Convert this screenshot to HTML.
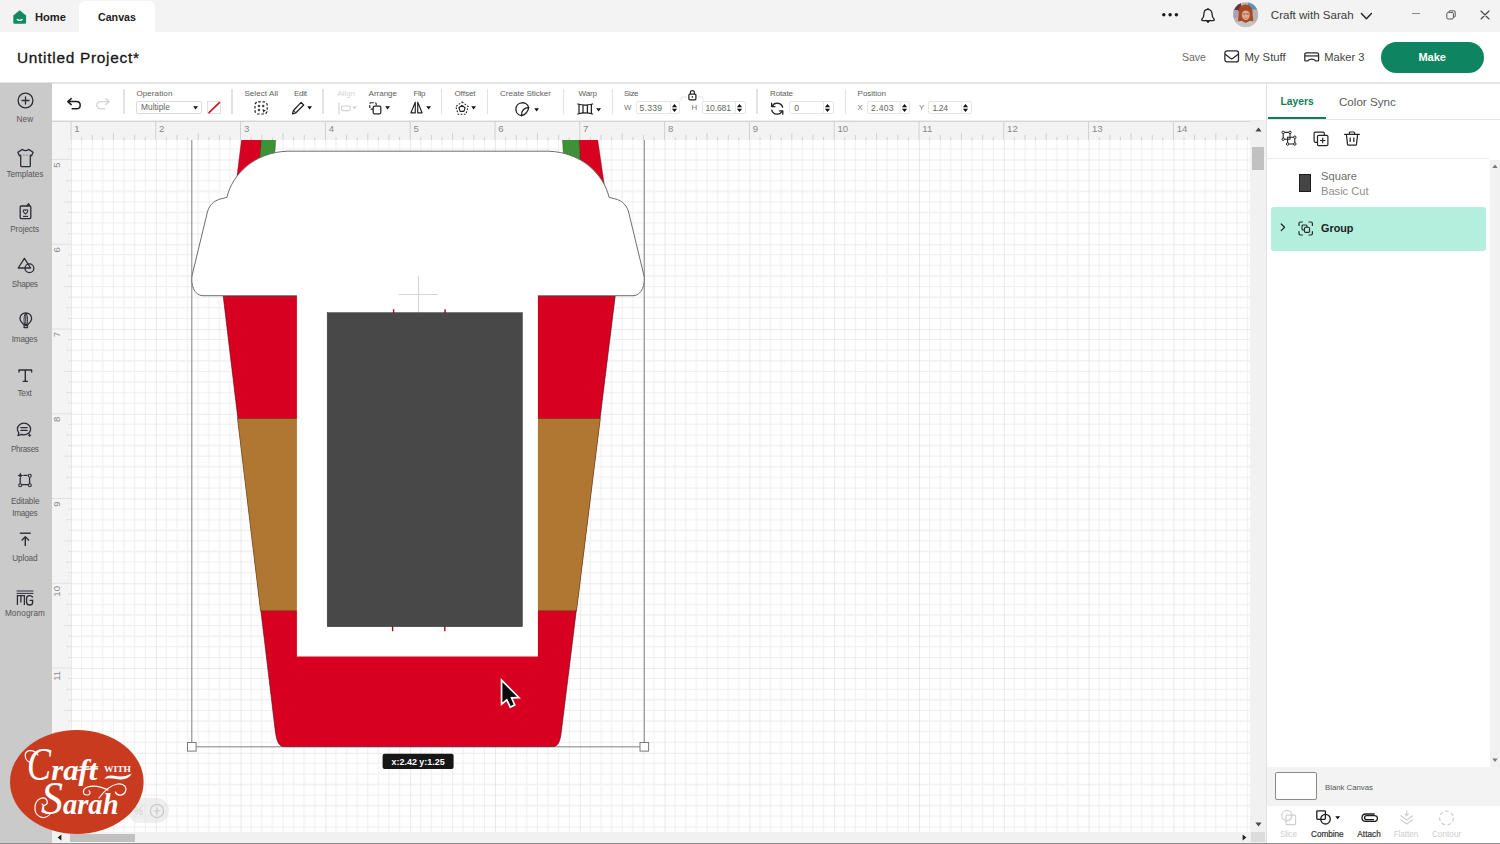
<!DOCTYPE html>
<html><head><meta charset="utf-8"><title>Untitled Project - Canvas</title>
<style>
html,body{margin:0;padding:0}
body{width:1500px;height:844px;overflow:hidden;position:relative;background:#fff;font-family:"Liberation Sans",sans-serif}
.t{position:absolute;white-space:nowrap;line-height:1}
.b{position:absolute;box-sizing:border-box}
svg{position:absolute;overflow:visible}
</style></head><body>
<div class="b" style="left:0px;top:0px;width:1500px;height:32px;background:#f3f3f3"></div>
<div class="b" style="left:79px;top:1px;width:76px;height:31px;background:#fff;border-radius:6px 6px 0 0"></div>
<div class="b" style="left:0px;top:32px;width:1500px;height:50px;background:#fff"></div>
<div class="b" style="left:0px;top:82px;width:1500px;height:2px;background:#e4e4e4"></div>
<div class="b" style="left:0px;top:83px;width:52px;height:760px;background:#cacaca"></div>
<div class="b" style="left:52px;top:84px;width:1214px;height:37px;background:#fff"></div>
<svg width="1500" height="844" viewBox="0 0 1500 844" style="left:0;top:0">
<defs>
<pattern id="g" x="71.0" y="159.5" width="84.8" height="84.75" patternUnits="userSpaceOnUse"><path d="M10.60 0V84.75M0 10.59H84.8" stroke="#eeeeee" stroke-width="1" fill="none"/><path d="M21.20 0V84.75M0 21.19H84.8" stroke="#eeeeee" stroke-width="1" fill="none"/><path d="M31.80 0V84.75M0 31.78H84.8" stroke="#eeeeee" stroke-width="1" fill="none"/><path d="M42.40 0V84.75M0 42.38H84.8" stroke="#eeeeee" stroke-width="1" fill="none"/><path d="M53.00 0V84.75M0 52.97H84.8" stroke="#eeeeee" stroke-width="1" fill="none"/><path d="M63.60 0V84.75M0 63.56H84.8" stroke="#eeeeee" stroke-width="1" fill="none"/><path d="M74.20 0V84.75M0 74.16H84.8" stroke="#eeeeee" stroke-width="1" fill="none"/><path d="M0 0V84.75M0 0H84.8" stroke="#d8d8d8" stroke-width="1.1" fill="none"/></pattern>
<clipPath id="cv"><rect x="71" y="140" width="1179" height="692"/></clipPath>
</defs>
<rect x="52" y="121" width="1198" height="711" fill="#fff"/>
<rect x="71" y="140" width="1179" height="692" fill="url(#g)"/>
<rect x="52" y="121" width="1198" height="19" fill="#f3f3f3"/>
<rect x="52" y="121" width="19" height="711" fill="#f4f4f4"/>
<rect x="52" y="120.6" width="1214" height="1.3" fill="#d2d2d2"/>
<path d="M71.00 140v-19M81.60 140v-3M92.20 140v-5M102.80 140v-3M113.40 140v-7M124.00 140v-3M134.60 140v-5M145.20 140v-3M155.80 140v-19M166.40 140v-3M177.00 140v-5M187.60 140v-3M198.20 140v-7M208.80 140v-3M219.40 140v-5M230.00 140v-3M240.60 140v-19M251.20 140v-3M261.80 140v-5M272.40 140v-3M283.00 140v-7M293.60 140v-3M304.20 140v-5M314.80 140v-3M325.40 140v-19M336.00 140v-3M346.60 140v-5M357.20 140v-3M367.80 140v-7M378.40 140v-3M389.00 140v-5M399.60 140v-3M410.20 140v-19M420.80 140v-3M431.40 140v-5M442.00 140v-3M452.60 140v-7M463.20 140v-3M473.80 140v-5M484.40 140v-3M495.00 140v-19M505.60 140v-3M516.20 140v-5M526.80 140v-3M537.40 140v-7M548.00 140v-3M558.60 140v-5M569.20 140v-3M579.80 140v-19M590.40 140v-3M601.00 140v-5M611.60 140v-3M622.20 140v-7M632.80 140v-3M643.40 140v-5M654.00 140v-3M664.60 140v-19M675.20 140v-3M685.80 140v-5M696.40 140v-3M707.00 140v-7M717.60 140v-3M728.20 140v-5M738.80 140v-3M749.40 140v-19M760.00 140v-3M770.60 140v-5M781.20 140v-3M791.80 140v-7M802.40 140v-3M813.00 140v-5M823.60 140v-3M834.20 140v-19M844.80 140v-3M855.40 140v-5M866.00 140v-3M876.60 140v-7M887.20 140v-3M897.80 140v-5M908.40 140v-3M919.00 140v-19M929.60 140v-3M940.20 140v-5M950.80 140v-3M961.40 140v-7M972.00 140v-3M982.60 140v-5M993.20 140v-3M1003.80 140v-19M1014.40 140v-3M1025.00 140v-5M1035.60 140v-3M1046.20 140v-7M1056.80 140v-3M1067.40 140v-5M1078.00 140v-3M1088.60 140v-19M1099.20 140v-3M1109.80 140v-5M1120.40 140v-3M1131.00 140v-7M1141.60 140v-3M1152.20 140v-5M1162.80 140v-3M1173.40 140v-19M1184.00 140v-3M1194.60 140v-5M1205.20 140v-3M1215.80 140v-7M1226.40 140v-3M1237.00 140v-5M1247.60 140v-3" stroke="#d0d0d0" stroke-width="1" fill="none"/>
<path d="M71 148.91h-3M71 159.50h-19M71 170.09h-3M71 180.69h-5M71 191.28h-3M71 201.88h-7M71 212.47h-3M71 223.06h-5M71 233.66h-3M71 244.25h-19M71 254.84h-3M71 265.44h-5M71 276.03h-3M71 286.62h-7M71 297.22h-3M71 307.81h-5M71 318.41h-3M71 329.00h-19M71 339.59h-3M71 350.19h-5M71 360.78h-3M71 371.38h-7M71 381.97h-3M71 392.56h-5M71 403.16h-3M71 413.75h-19M71 424.34h-3M71 434.94h-5M71 445.53h-3M71 456.12h-7M71 466.72h-3M71 477.31h-5M71 487.91h-3M71 498.50h-19M71 509.09h-3M71 519.69h-5M71 530.28h-3M71 540.88h-7M71 551.47h-3M71 562.06h-5M71 572.66h-3M71 583.25h-19M71 593.84h-3M71 604.44h-5M71 615.03h-3M71 625.62h-7M71 636.22h-3M71 646.81h-5M71 657.41h-3M71 668.00h-19M71 678.59h-3M71 689.19h-5M71 699.78h-3M71 710.38h-7M71 720.97h-3M71 731.56h-5M71 742.16h-3M71 752.75h-19M71 763.34h-3M71 773.94h-5M71 784.53h-3M71 795.12h-7M71 805.72h-3M71 816.31h-5M71 826.91h-3" stroke="#e0e0e0" stroke-width="1" fill="none"/>
<text x="74.3" y="131.9" font-size="9.6" fill="#8a8a8a">1</text>
<text x="159.1" y="131.9" font-size="9.6" fill="#8a8a8a">2</text>
<text x="243.9" y="131.9" font-size="9.6" fill="#8a8a8a">3</text>
<text x="328.7" y="131.9" font-size="9.6" fill="#8a8a8a">4</text>
<text x="413.5" y="131.9" font-size="9.6" fill="#8a8a8a">5</text>
<text x="498.3" y="131.9" font-size="9.6" fill="#8a8a8a">6</text>
<text x="583.1" y="131.9" font-size="9.6" fill="#8a8a8a">7</text>
<text x="667.9" y="131.9" font-size="9.6" fill="#8a8a8a">8</text>
<text x="752.7" y="131.9" font-size="9.6" fill="#8a8a8a">9</text>
<text x="837.5" y="131.9" font-size="9.6" fill="#8a8a8a">10</text>
<text x="922.3" y="131.9" font-size="9.6" fill="#8a8a8a">11</text>
<text x="1007.1" y="131.9" font-size="9.6" fill="#8a8a8a">12</text>
<text x="1091.9" y="131.9" font-size="9.6" fill="#8a8a8a">13</text>
<text x="1176.7" y="131.9" font-size="9.6" fill="#8a8a8a">14</text>
<text transform="translate(60.4 162.3) rotate(-90)" text-anchor="end" font-size="9.6" fill="#8a8a8a">5</text>
<text transform="translate(60.4 247.1) rotate(-90)" text-anchor="end" font-size="9.6" fill="#8a8a8a">6</text>
<text transform="translate(60.4 331.8) rotate(-90)" text-anchor="end" font-size="9.6" fill="#8a8a8a">7</text>
<text transform="translate(60.4 416.6) rotate(-90)" text-anchor="end" font-size="9.6" fill="#8a8a8a">8</text>
<text transform="translate(60.4 501.3) rotate(-90)" text-anchor="end" font-size="9.6" fill="#8a8a8a">9</text>
<text transform="translate(60.4 586.0) rotate(-90)" text-anchor="end" font-size="9.6" fill="#8a8a8a">10</text>
<text transform="translate(60.4 670.8) rotate(-90)" text-anchor="end" font-size="9.6" fill="#8a8a8a">11</text>
<g clip-path="url(#cv)">
<rect x="191.8" y="-159" width="452.5" height="905.8" fill="none" stroke="#8c8c8c" stroke-width="1.1"/>
<path d="M241.6 139L261.5 139L258 200L234 200Z" fill="#d80021" stroke="#6b0010" stroke-width=".4"/>
<path d="M261.5 139L275.8 139L273.6 170L258.6 170Z" fill="#3d9136" stroke="#1f4d1b" stroke-width=".4"/>
<path d="M597.6 139L579 139L582 200L606.5 200Z" fill="#d80021" stroke="#6b0010" stroke-width=".4"/>
<path d="M579 139L562.4 139L564.4 170L580.8 170Z" fill="#3d9136" stroke="#1f4d1b" stroke-width=".4"/>
<path d="M223.2 295.9L615.2 295.9L561.4 731C560.2 742 558 746.6 552.6 746.6L284.4 746.6C279 746.6 276.8 742 275.3 731Z" fill="#d80021" stroke="#5a0010" stroke-width=".6"/>
<path d="M237.5 418.5L600.3 418.5L576.5 610.8L260.5 610.8Z" fill="#b07733" stroke="#5a3a10" stroke-width=".5"/>
<path d="M288 151.2L548 151.2C582 152 604 175 609 197.2L612 198.2C620 199.5 626 203 628.6 212L643.8 275C645.6 284 642 295.7 633 295.7L203 295.7C194 295.7 190.4 284 192.2 275L207.4 212C210 203 216 199.5 224 198.2L227 197.2C232 175 254 152 288 151.2Z" fill="#fff" stroke="#6e6e6e" stroke-width="1"/>
<rect x="296.9" y="292" width="241" height="364.5" fill="#fff"/>
<path d="M398.6 294.5H437.7M418.5 275.5V313" stroke="#d4d4d4" stroke-width="1.1" fill="none"/>
<path d="M393.6 309.3V314M445.1 309.3V314M392.6 626V631.2M444.8 626V631.2" stroke="#a00d18" stroke-width="1.4" fill="none"/>
<rect x="327.2" y="312.7" width="195.2" height="314" fill="#484848" stroke="#333" stroke-width=".5"/>
<rect x="187.5" y="742.5" width="8.6" height="8.6" fill="#fff" stroke="#7a7a7a" stroke-width="1"/>
<rect x="640" y="742.5" width="8.6" height="8.6" fill="#fff" stroke="#7a7a7a" stroke-width="1"/>
<rect x="382.6" y="753.7" width="71" height="15.2" rx="2" fill="#161616"/>
<text x="418.1" y="764.6" text-anchor="middle" font-size="9.2" font-weight="bold" fill="#fff" textLength="53" lengthAdjust="spacingAndGlyphs">x:2.42 y:1.25</text>
<path d="M502.4 682.2L502.4 702.4L507 698.6L510.7 706L513.6 704.6L510.3 697L517 696.8Z" fill="#0a0a0a" stroke="#fff" stroke-width="3.4" stroke-linejoin="miter" paint-order="stroke"/>
</g>
</svg>
<svg style="left:13px;top:10px" width="13.4" height="14" viewBox="0 0 13.4 14" ><path d="M0.3 5.6L6.7 0.3L13.1 5.6V12.4Q13.1 13.7 11.8 13.7H1.6Q0.3 13.7 0.3 12.4Z" fill="#12895f"/><path d="M4.3 9.4Q6.7 11.4 9.1 9.4" stroke="#fff" stroke-width="1.3" fill="none" stroke-linecap="round"/></svg>
<span class="t" style="left:35.00px;top:12.00px;font-size:11.15px;color:#222;font-weight:bold;">Home</span>
<span class="t" style="left:98.00px;top:12.00px;font-size:10.67px;color:#222;font-weight:bold;">Canvas</span>
<svg style="left:1160px;top:10.6px" width="22" height="7.4" viewBox="0 0 22 7.4" ><circle cx="3.8" cy="3.7" r="1.7" fill="#1a1a1a"/><circle cx="10.1" cy="3.7" r="1.7" fill="#1a1a1a"/><circle cx="16.4" cy="3.7" r="1.7" fill="#1a1a1a"/></svg>
<svg style="left:1199px;top:6.6px" width="18" height="18" viewBox="0 0 18 18" ><path d="M9 2.4C6.2 2.4 4.9 4.6 4.9 7.2C4.9 9.6 4.2 10.8 3 12C2.4 12.7 2.8 13.6 3.7 13.6H14.3C15.2 13.6 15.6 12.7 15 12C13.8 10.8 13.1 9.6 13.1 7.2C13.1 4.6 11.8 2.4 9 2.4Z" fill="none" stroke="#222" stroke-width="1.3" stroke-linejoin="round"/><path d="M7.4 14.2Q9 17.2 10.6 14.2Z" fill="#222" stroke="#222" stroke-width=".6"/><circle cx="9" cy="1.8" r=".8" fill="#222"/></svg>
<svg style="left:1232.8px;top:1.7px" width="25.4" height="25.4" viewBox="0 0 25.4 25.4" ><defs><clipPath id="av"><circle cx="12.7" cy="12.7" r="12.5"/></clipPath></defs><g clip-path="url(#av)"><rect width="25.4" height="25.4" fill="#b7b3b5"/><rect x="0" y="0" width="8" height="9" fill="#6b3446"/><rect x="15" y="0" width="11" height="7.5" fill="#5a94b8"/><rect x="0" y="8" width="5" height="8" fill="#a9a3b4"/><path d="M12.6 2.6C7.6 2.6 5.4 6.6 5.6 11.4C5.8 15 4.6 17.6 5.4 19.8C7 21.4 18.4 21.4 20 19.6C20.8 17.4 19.4 14.6 19.6 11C19.8 6.4 17.4 2.6 12.6 2.6Z" fill="#a84a24"/><path d="M0 25.4V22Q4 18.6 9 19L12.7 21L16.4 19Q21.4 18.6 25.4 22V25.4Z" fill="#c6c3c4"/><ellipse cx="12.8" cy="12.8" rx="4" ry="5.2" fill="#dda890"/><path d="M8.6 11Q9.4 6.6 13 6.8Q16.6 7 17 11Q15 8.4 12.4 8.6Q10 8.8 8.6 11Z" fill="#a84a24"/><path d="M9.6 12h2.6M13.4 12h2.6" stroke="#5a3a34" stroke-width=".7"/><path d="M11.2 15.6Q12.8 16.8 14.4 15.6" stroke="#c47a6a" stroke-width=".7" fill="none"/></g></svg>
<span class="t" style="left:1270.80px;top:10.00px;font-size:11.55px;color:#3a3a3a;">Craft with Sarah</span>
<svg style="left:1360px;top:11.5px" width="13" height="9" viewBox="0 0 13 9" ><path d="M1.4 1.6L6.4 6.8L11.4 1.6" fill="none" stroke="#222" stroke-width="1.4" stroke-linecap="round" stroke-linejoin="round"/></svg>
<div class="b" style="left:1411.7px;top:13.2px;width:8.299999999999955px;height:1.1000000000000014px;background:#8a8a8a"></div>
<svg style="left:1446px;top:10px" width="10" height="10" viewBox="0 0 10 10" ><rect x="0.8" y="2.4" width="6.6" height="6.6" rx="1.4" fill="none" stroke="#555" stroke-width="1"/><path d="M2.8 2.2V1.9Q2.8 0.8 3.9 0.8H8.1Q9.2 0.8 9.2 1.9V6.1Q9.2 7.2 8.1 7.2H7.7" fill="none" stroke="#555" stroke-width="1"/></svg>
<svg style="left:1480px;top:10px" width="10" height="10" viewBox="0 0 10 10" ><path d="M1 1L9 9M9 1L1 9" stroke="#444" stroke-width="1.1" stroke-linecap="round"/></svg>
<span class="t" style="left:17.00px;top:50.00px;font-size:15.40px;color:#161616;letter-spacing:0.72px;-webkit-text-stroke:.3px #161616;">Untitled Project*</span>
<span class="t" style="left:1182.00px;top:52.00px;font-size:10.53px;color:#6a6a6a;">Save</span>
<svg style="left:1223.6px;top:50.4px" width="15.4" height="13" viewBox="0 0 15.4 13" ><rect x="0.9" y="0.9" width="13.6" height="11" rx="2.2" fill="none" stroke="#2a2a2a" stroke-width="1.3"/><path d="M1.2 4.2L6.4 8.3Q7.7 9.2 9 8.3L14.2 4.2" fill="none" stroke="#2a2a2a" stroke-width="1.3" stroke-linejoin="round"/></svg>
<span class="t" style="left:1244.40px;top:52.00px;font-size:11.32px;color:#444;">My Stuff</span>
<svg style="left:1303.7px;top:52.4px" width="15.4" height="9.6" viewBox="0 0 16 10" ><path d="M2.6 0.9H13.4Q15.2 0.9 15.2 2.7V8.6Q15.2 9.3 14.5 9.3H12.3Q11.6 9.3 11.4 8.7Q10.9 7.4 8 7.4Q5.1 7.4 4.6 8.7Q4.4 9.3 3.7 9.3H1.5Q0.8 9.3 0.8 8.6V2.7Q0.8 0.9 2.6 0.9Z" fill="none" stroke="#2a2a2a" stroke-width="1.3" stroke-linejoin="round"/><path d="M1 4.1H15" stroke="#2a2a2a" stroke-width="1.3"/></svg>
<span class="t" style="left:1324.30px;top:52.00px;font-size:11.11px;color:#444;">Maker 3</span>
<div class="b" style="left:1380.7px;top:42px;width:103.29999999999995px;height:30.700000000000003px;background:#0e8560;border-radius:16px"></div>
<span class="t" style="left:1418.40px;top:52.00px;font-size:11.04px;color:#fff;font-weight:bold;">Make</span>
<div class="b" style="left:123.4px;top:89px;width:1.1999999999999886px;height:25px;background:#e2e2e2"></div>
<div class="b" style="left:231.4px;top:89px;width:1.1999999999999886px;height:25px;background:#e2e2e2"></div>
<div class="b" style="left:322.4px;top:89px;width:1.2000000000000455px;height:25px;background:#e2e2e2"></div>
<div class="b" style="left:440.79999999999995px;top:89px;width:1.2000000000000455px;height:25px;background:#e2e2e2"></div>
<div class="b" style="left:487.0px;top:89px;width:1.2000000000000455px;height:25px;background:#e2e2e2"></div>
<div class="b" style="left:563.0px;top:89px;width:1.2000000000000455px;height:25px;background:#e2e2e2"></div>
<div class="b" style="left:611.8px;top:89px;width:1.2000000000000455px;height:25px;background:#e2e2e2"></div>
<div class="b" style="left:756.4px;top:89px;width:1.2000000000000455px;height:25px;background:#e2e2e2"></div>
<div class="b" style="left:844.9px;top:89px;width:1.2000000000000455px;height:25px;background:#e2e2e2"></div>
<svg style="left:66px;top:97px" width="16" height="14" viewBox="0 0 16 14" ><path d="M5.2 1.6L1.8 4.6L5.2 7.6M2 4.6H10.2C12.6 4.6 14.2 6 14.2 8.2C14.2 10.4 12.6 11.8 10.2 11.8H6.2" fill="none" stroke="#1e1e1e" stroke-width="1.5" stroke-linecap="round" stroke-linejoin="round"/></svg>
<svg style="left:95px;top:97px" width="16" height="14" viewBox="0 0 16 14" ><path d="M10.8 1.6L14.2 4.6L10.8 7.6M14 4.6H5.8C3.4 4.6 1.8 6 1.8 8.2C1.8 10.4 3.4 11.8 5.8 11.8H9.8" fill="none" stroke="#d4d4d4" stroke-width="1.3" stroke-linecap="round" stroke-linejoin="round"/></svg>
<span class="t" style="left:136.40px;top:90.00px;font-size:8.05px;color:#5e5e5e;letter-spacing:0.08px;">Operation</span>
<div class="b" style="left:136.4px;top:101px;width:65.6px;height:13px;border:1px solid #dcdcdc;border-radius:2px;background:#fff"></div>
<span class="t" style="left:141.00px;top:103.00px;font-size:8.40px;color:#666;letter-spacing:0.00px;">Multiple</span>
<svg style="left:193.0px;top:106.0px" width="5.2" height="3.6" viewBox="0 0 5.2 3.6" ><path d="M0.2 0.3H5L2.6 3.4Z" fill="#111"/></svg>
<div class="b" style="left:207px;top:101px;width:14px;height:13px;border:1px solid #e2e2e2;background:#fff"></div>
<svg style="left:207px;top:101px" width="14" height="13" viewBox="0 0 14 13" ><path d="M2 11.6L12.4 1.6" stroke="#c8161d" stroke-width="1.6" stroke-linecap="round"/></svg>
<span class="t" style="left:244.40px;top:90.00px;font-size:8.05px;color:#5e5e5e;letter-spacing:0.06px;">Select All</span>
<svg style="left:254px;top:101px" width="14.4" height="14" viewBox="0 0 14.4 14" ><rect x="1" y="0.8" width="12.2" height="12.2" rx="3.2" fill="none" stroke="#222" stroke-width="1.2" stroke-dasharray="2.6 1.7"/><circle cx="5" cy="4.9" r="1.25" fill="#444"/><circle cx="9.2" cy="4.9" r="1.25" fill="#444"/><circle cx="5" cy="9" r="1.25" fill="#444"/><path d="M8.4 8.2L12 9.6L10.4 10.3L9.7 11.9Z" fill="#111"/></svg>
<span class="t" style="left:294.00px;top:90.00px;font-size:8.05px;color:#5e5e5e;letter-spacing:-0.31px;">Edit</span>
<svg style="left:290.6px;top:100.6px" width="14" height="14.4" viewBox="0 0 14 14.4" ><path d="M10.1 1.4L12.7 4L4.9 11.8L1.5 12.9L2.5 9.5Z" fill="none" stroke="#222" stroke-width="1.25" stroke-linejoin="round"/><path d="M2.6 9.4L5 11.8" stroke="#222" stroke-width="1"/></svg>
<svg style="left:307.0px;top:106.0px" width="5.2" height="3.6" viewBox="0 0 5.2 3.6" ><path d="M0.2 0.3H5L2.6 3.4Z" fill="#111"/></svg>
<span class="t" style="left:337.60px;top:90.00px;font-size:8.05px;color:#d6d6d6;letter-spacing:-0.12px;">Align</span>
<svg style="left:337.6px;top:101.6px" width="14" height="13" viewBox="0 0 14 13" ><path d="M1 0.6V12.4" stroke="#d4d4d4" stroke-width="1.2"/><rect x="3.6" y="4" width="8.6" height="4.6" rx="0.8" fill="none" stroke="#d4d4d4" stroke-width="1.2"/></svg>
<svg style="left:352.4px;top:106.0px" width="5.2" height="3.6" viewBox="0 0 5.2 3.6" ><path d="M0.2 0.3H5L2.6 3.4Z" fill="#d4d4d4"/></svg>
<span class="t" style="left:368.60px;top:90.00px;font-size:8.05px;color:#5e5e5e;letter-spacing:-0.04px;">Arrange</span>
<svg style="left:369.4px;top:101.8px" width="12.6" height="12.6" viewBox="0 0 12.6 12.6" ><rect x="0.8" y="0.8" width="6.4" height="6.4" rx="1" fill="none" stroke="#222" stroke-width="1.15" stroke-dasharray="3 1.4"/><rect x="4.2" y="4.2" width="7.6" height="7.6" rx="1.2" fill="#fff" stroke="#222" stroke-width="1.25"/></svg>
<svg style="left:385.0px;top:106.0px" width="5.2" height="3.6" viewBox="0 0 5.2 3.6" ><path d="M0.2 0.3H5L2.6 3.4Z" fill="#111"/></svg>
<span class="t" style="left:413.40px;top:90.00px;font-size:8.05px;color:#5e5e5e;letter-spacing:-0.32px;">Flip</span>
<svg style="left:410.2px;top:101.4px" width="13" height="13" viewBox="0 0 13 13" ><path d="M5.3 1.2V11.8H0.9Z" fill="none" stroke="#222" stroke-width="1.15" stroke-linejoin="round"/><path d="M7.7 1.2V11.8H12.1Z" fill="none" stroke="#222" stroke-width="1.15" stroke-linejoin="round"/></svg>
<svg style="left:425.59999999999997px;top:106.0px" width="5.2" height="3.6" viewBox="0 0 5.2 3.6" ><path d="M0.2 0.3H5L2.6 3.4Z" fill="#111"/></svg>
<span class="t" style="left:454.40px;top:90.00px;font-size:8.05px;color:#5e5e5e;letter-spacing:-0.03px;">Offset</span>
<svg style="left:455px;top:100.6px" width="14" height="14.4" viewBox="0 0 14 14.4" ><path d="M7 1L13.2 5.6L10.9 13.2H3.1L0.8 5.6Z" fill="none" stroke="#222" stroke-width="1.1" stroke-dasharray="1.7 1.5" stroke-linejoin="round"/><path d="M7 4.4L10.1 6.7L8.9 10.4H5.1L3.9 6.7Z" fill="none" stroke="#222" stroke-width="1.15" stroke-linejoin="round"/></svg>
<svg style="left:471.2px;top:106.0px" width="5.2" height="3.6" viewBox="0 0 5.2 3.6" ><path d="M0.2 0.3H5L2.6 3.4Z" fill="#111"/></svg>
<span class="t" style="left:500.00px;top:90.00px;font-size:8.05px;color:#5e5e5e;letter-spacing:-0.00px;">Create Sticker</span>
<svg style="left:514.4px;top:102.4px" width="16.4" height="15" viewBox="0 0 16.4 15" ><path d="M7.6 13.7A6.5 6.5 0 1 1 14.7 5.6" fill="none" stroke="#222" stroke-width="1.3" stroke-linecap="round"/><path d="M14.7 5.6C10.4 5.4 7 8.8 7.6 13.7C10.8 12.8 14.6 9.4 14.7 5.6Z" fill="none" stroke="#222" stroke-width="1.3" stroke-linejoin="round"/></svg>
<svg style="left:533.6px;top:107.60000000000001px" width="5.2" height="3.6" viewBox="0 0 5.2 3.6" ><path d="M0.2 0.3H5L2.6 3.4Z" fill="#111"/></svg>
<span class="t" style="left:578.60px;top:90.00px;font-size:8.05px;color:#5e5e5e;letter-spacing:-0.17px;">Warp</span>
<svg style="left:577px;top:103.4px" width="16.4" height="12" viewBox="0 0 16.4 12" ><path d="M0.8 1Q8.2 3.2 15.6 1M0.8 11Q8.2 8.8 15.6 11M2 1.4V10.6M6 2.2V9.8M10.4 2.2V9.8M14.4 1.4V10.6" fill="none" stroke="#222" stroke-width="1.25" stroke-linecap="round"/></svg>
<svg style="left:596.0px;top:107.60000000000001px" width="5.2" height="3.6" viewBox="0 0 5.2 3.6" ><path d="M0.2 0.3H5L2.6 3.4Z" fill="#111"/></svg>
<span class="t" style="left:624.00px;top:90.00px;font-size:8.05px;color:#5e5e5e;letter-spacing:-0.37px;">Size</span>
<span class="t" style="left:624.00px;top:104.00px;font-size:7.80px;color:#777;letter-spacing:-1.01px;">W</span>
<div class="b" style="left:636px;top:101px;width:44px;height:13px;border:1px solid #e6e6e6;border-radius:2px;background:#fff"></div>
<span class="t" style="left:639.60px;top:104.00px;font-size:8.60px;color:#666;letter-spacing:0.22px;">5.339</span>
<div class="b" style="left:669.5999999999999px;top:101.5px;width:0.8000000000000682px;height:12.0px;background:#e8e8e8"></div>
<svg style="left:670.8px;top:102.6px" width="7" height="10" viewBox="0 0 7 10" ><path d="M3.5 0.9L6.1 4.2H0.9ZM3.5 9.1L6.1 5.8H0.9Z" fill="#111"/></svg>
<svg style="left:680px;top:89px" width="24" height="12" viewBox="0 0 24 12" ><path d="M1 11.6V9.4Q1 8 2.4 8H7M23 11.6V9.4Q23 8 21.6 8H18" fill="none" stroke="#e0e0e0" stroke-width="1"/><rect x="8.9" y="5" width="7" height="5.8" rx="1" fill="#fff" stroke="#222" stroke-width="1.25"/><path d="M10.4 5V3.6Q10.4 1.6 12.4 1.6Q14.4 1.6 14.4 3.6V5" fill="none" stroke="#222" stroke-width="1.2"/><circle cx="12.4" cy="7.9" r="0.8" fill="#222"/></svg>
<span class="t" style="left:691.60px;top:104.00px;font-size:7.80px;color:#777;letter-spacing:0.18px;">H</span>
<div class="b" style="left:702px;top:101px;width:43.60000000000002px;height:13px;border:1px solid #e6e6e6;border-radius:2px;background:#fff"></div>
<span class="t" style="left:705.40px;top:104.00px;font-size:8.60px;color:#666;letter-spacing:-0.14px;">10.681</span>
<div class="b" style="left:735.1999999999999px;top:101.5px;width:0.8000000000000682px;height:12.0px;background:#e8e8e8"></div>
<svg style="left:736.4px;top:102.6px" width="7" height="10" viewBox="0 0 7 10" ><path d="M3.5 0.9L6.1 4.2H0.9ZM3.5 9.1L6.1 5.8H0.9Z" fill="#111"/></svg>
<span class="t" style="left:770.00px;top:90.00px;font-size:8.05px;color:#5e5e5e;letter-spacing:-0.15px;">Rotate</span>
<svg style="left:770.4px;top:101.6px" width="14.4" height="13.4" viewBox="0 0 14.4 13.4" ><path d="M12.6 5.2A5.6 5.6 0 0 0 2.3 4.2M1.8 8.2A5.6 5.6 0 0 0 12.1 9.2" fill="none" stroke="#222" stroke-width="1.3" stroke-linecap="round"/><path d="M1.6 1.2V4.6H5M12.8 12.2V8.8H9.4" fill="none" stroke="#222" stroke-width="1.3" stroke-linecap="round" stroke-linejoin="round"/></svg>
<div class="b" style="left:789px;top:101px;width:44.60000000000002px;height:13px;border:1px solid #e6e6e6;border-radius:2px;background:#fff"></div>
<span class="t" style="left:794.20px;top:104.00px;font-size:8.60px;color:#666;letter-spacing:-0.22px;">0</span>
<div class="b" style="left:823.1999999999999px;top:101.5px;width:0.8000000000000682px;height:12.0px;background:#e8e8e8"></div>
<svg style="left:824.4px;top:102.6px" width="7" height="10" viewBox="0 0 7 10" ><path d="M3.5 0.9L6.1 4.2H0.9ZM3.5 9.1L6.1 5.8H0.9Z" fill="#111"/></svg>
<span class="t" style="left:857.60px;top:90.00px;font-size:8.05px;color:#5e5e5e;letter-spacing:-0.04px;">Position</span>
<span class="t" style="left:857.60px;top:104.00px;font-size:7.80px;color:#777;letter-spacing:-0.43px;">X</span>
<div class="b" style="left:867px;top:101px;width:43.39999999999998px;height:13px;border:1px solid #e6e6e6;border-radius:2px;background:#fff"></div>
<span class="t" style="left:871.00px;top:104.00px;font-size:8.60px;color:#666;letter-spacing:0.28px;">2.403</span>
<div class="b" style="left:899.9999999999999px;top:101.5px;width:0.8000000000000682px;height:12.0px;background:#e8e8e8"></div>
<svg style="left:901.1999999999999px;top:102.6px" width="7" height="10" viewBox="0 0 7 10" ><path d="M3.5 0.9L6.1 4.2H0.9ZM3.5 9.1L6.1 5.8H0.9Z" fill="#111"/></svg>
<span class="t" style="left:919.00px;top:104.00px;font-size:7.80px;color:#777;letter-spacing:-0.83px;">Y</span>
<div class="b" style="left:928px;top:101px;width:43.60000000000002px;height:13px;border:1px solid #e6e6e6;border-radius:2px;background:#fff"></div>
<span class="t" style="left:932.40px;top:104.00px;font-size:8.60px;color:#666;letter-spacing:-0.39px;">1.24</span>
<div class="b" style="left:961.1999999999999px;top:101.5px;width:0.8000000000000682px;height:12.0px;background:#e8e8e8"></div>
<svg style="left:962.4px;top:102.6px" width="7" height="10" viewBox="0 0 7 10" ><path d="M3.5 0.9L6.1 4.2H0.9ZM3.5 9.1L6.1 5.8H0.9Z" fill="#111"/></svg>
<svg style="left:16.5px;top:92px" width="17" height="17" viewBox="0 0 17 17" ><circle cx="8.5" cy="8.5" r="7.4" fill="none" stroke="#2d2d36" stroke-width="1.3"/><path d="M8.5 5V12M5 8.5H12" stroke="#2d2d36" stroke-width="1.3" stroke-linecap="round"/></svg>
<span class="t" style="left:16.60px;top:116.00px;font-size:8.20px;color:#565656;letter-spacing:0.11px;">New</span>
<svg style="left:16.5px;top:147.6px" width="17" height="20" viewBox="0 0 17 20" ><path d="M5.4 1.4L0.9 4.2L2.4 7.8L3.7 7.2V17.4Q3.7 18.6 4.9 18.6H12.1Q13.3 18.6 13.3 17.4V7.2L14.6 7.8L16.1 4.2L11.6 1.4Q8.5 3.8 5.4 1.4Z" fill="none" stroke="#2d2d36" stroke-width="1.3" stroke-linejoin="round"/><circle cx="7" cy="7" r=".6" fill="#2d2d36"/><circle cx="10" cy="7" r=".6" fill="#2d2d36"/></svg>
<span class="t" style="left:6.50px;top:171.00px;font-size:8.20px;color:#565656;letter-spacing:-0.05px;">Templates</span>
<svg style="left:18.5px;top:203px" width="13" height="16.5" viewBox="0 0 13 16.5" ><path d="M2.2 3H10.8Q11.8 3 11.8 4V14.6Q11.8 15.6 10.8 15.6H2.2Q1.2 15.6 1.2 14.6V4Q1.2 3 2.2 3ZM7.6 3L9.6 0.8L11 3" fill="none" stroke="#2d2d36" stroke-width="1.3" stroke-linejoin="round"/><path d="M6.5 11Q3.8 9 4.2 7.5Q5 6 6.5 7.4Q8 6 8.8 7.5Q9.2 9 6.5 11Z" fill="none" stroke="#2d2d36" stroke-width="1.1" stroke-linejoin="round"/><path d="M4 13.4H9" stroke="#2d2d36" stroke-width="1.1"/></svg>
<span class="t" style="left:10.20px;top:226.00px;font-size:8.20px;color:#565656;letter-spacing:-0.09px;">Projects</span>
<svg style="left:16.5px;top:256.5px" width="18" height="17" viewBox="0 0 18 17" ><path d="M7.4 1.4L13.6 11H1.2Z" fill="none" stroke="#2d2d36" stroke-width="1.3" stroke-linejoin="round"/><circle cx="12.4" cy="11.2" r="4.4" fill="none" stroke="#2d2d36" stroke-width="1.3"/></svg>
<span class="t" style="left:11.80px;top:281.00px;font-size:8.20px;color:#565656;letter-spacing:-0.32px;">Shapes</span>
<svg style="left:18.5px;top:311.5px" width="13.6" height="17" viewBox="0 0 13.6 17" ><path d="M6.8 1C10.2 1 12.6 3.4 12.6 6.4C12.6 9 10.4 11 8.8 12.6H4.8C3.2 11 1 9 1 6.4C1 3.4 3.4 1 6.8 1Z" fill="none" stroke="#2d2d36" stroke-width="1.3"/><path d="M6.8 1C5 2.6 4.6 9 5.6 12.4M6.8 1C8.6 2.6 9 9 8 12.4M6.8 1.2V12.4" fill="none" stroke="#2d2d36" stroke-width="1"/><path d="M5 13.6H8.6V15.6H5Z" fill="none" stroke="#2d2d36" stroke-width="1.1" stroke-linejoin="round"/></svg>
<span class="t" style="left:11.80px;top:336.00px;font-size:8.20px;color:#565656;letter-spacing:-0.22px;">Images</span>
<svg style="left:17.5px;top:368.5px" width="14.6" height="13.4" viewBox="0 0 14.6 13.4" ><path d="M1 3.4V1H13.6V3.4M7.3 1V12.2M4.6 12.4H10" fill="none" stroke="#2d2d36" stroke-width="1.4" stroke-linejoin="round"/></svg>
<span class="t" style="left:17.50px;top:390.00px;font-size:8.20px;color:#565656;letter-spacing:-0.23px;">Text</span>
<svg style="left:16.4px;top:421.8px" width="16.6" height="15.6" viewBox="0 0 16.6 15.6" ><path d="M8 1.2C11.8 1.2 14.6 3.8 14.6 7C14.6 10.2 11.8 12.8 8 12.8C7 12.8 6 12.6 5.2 12.3L2 13.6L2.8 10.8C1.8 9.8 1.4 8.4 1.4 7C1.4 3.8 4.2 1.2 8 1.2Z" fill="none" stroke="#2d2d36" stroke-width="1.3" stroke-linejoin="round"/><path d="M4.8 5.6H11.2M4.8 8.4H11.2" stroke="#2d2d36" stroke-width="1.2" stroke-linecap="round"/><path d="M13.6 11.6V14.8M12 13.2H15.2" stroke="#2d2d36" stroke-width="1.1"/></svg>
<span class="t" style="left:10.90px;top:446.00px;font-size:8.20px;color:#565656;letter-spacing:-0.33px;">Phrases</span>
<svg style="left:17px;top:471.5px" width="16" height="16.5" viewBox="0 0 16 16.5" ><path d="M3.2 6V12.6H12.6V5.4M6.4 3.4H10.6" fill="none" stroke="#2d2d36" stroke-width="1.3"/><circle cx="3.2" cy="13.2" r="1.5" fill="#cacaca" stroke="#2d2d36" stroke-width="1.1"/><circle cx="12.8" cy="13.2" r="1.5" fill="#cacaca" stroke="#2d2d36" stroke-width="1.1"/><circle cx="12.8" cy="3.8" r="1.5" fill="#cacaca" stroke="#2d2d36" stroke-width="1.1"/><path d="M3.4 0.6L4.3 2.6L6.3 3.5L4.3 4.4L3.4 6.4L2.5 4.4L0.5 3.5L2.5 2.6Z" fill="#2d2d36"/></svg>
<span class="t" style="left:10.90px;top:498.00px;font-size:8.20px;color:#565656;letter-spacing:-0.14px;">Editable</span>
<span class="t" style="left:12.30px;top:510.00px;font-size:8.20px;color:#565656;letter-spacing:-0.32px;">Images</span>
<svg style="left:18.5px;top:531.5px" width="12.6" height="15" viewBox="0 0 12.6 15" ><path d="M0.8 1.2H11.8" stroke="#2d2d36" stroke-width="1.4"/><path d="M6.3 14V5M2.6 8.4L6.3 4.8L10 8.4" fill="none" stroke="#2d2d36" stroke-width="1.4" stroke-linejoin="round"/></svg>
<span class="t" style="left:12.30px;top:555.00px;font-size:8.20px;color:#565656;letter-spacing:-0.14px;">Upload</span>
<svg style="left:16px;top:590px" width="18" height="16.4" viewBox="0 0 18 16.4" ><path d="M0.6 1H17.4M0.6 3.4H17.4" stroke="#2d2d36" stroke-width="1"/><path d="M1.4 15V5.6H8.4V15M4.9 5.6V12.6" fill="none" stroke="#2d2d36" stroke-width="1.3"/><path d="M16.6 7.6Q16.4 5.6 13.6 5.6Q10.6 5.6 10.6 8.4V12Q10.6 15 13.6 15Q16.6 15 16.6 12.4V10.4H13.6" fill="none" stroke="#2d2d36" stroke-width="1.3"/></svg>
<span class="t" style="left:4.90px;top:610.00px;font-size:8.20px;color:#565656;letter-spacing:0.13px;">Monogram</span>
<div class="b" style="left:1250px;top:121px;width:16px;height:711px;background:#f1f1f1"></div>
<div class="b" style="left:1252px;top:147px;width:12px;height:22.5px;background:#c1c1c1"></div>
<svg style="left:1254.5px;top:126.5px" width="7" height="5" viewBox="0 0 7 5" ><path d="M3.5 0.6L6.6 4.4H0.4Z" fill="#4a4a4a"/></svg>
<svg style="left:1254.5px;top:821.5px" width="7" height="5" viewBox="0 0 7 5" ><path d="M3.5 4.4L6.6 0.6H0.4Z" fill="#4a4a4a"/></svg>
<div class="b" style="left:52px;top:832px;width:1214px;height:11px;background:#f1f1f1"></div>
<div class="b" style="left:70.2px;top:833.5px;width:64.99999999999999px;height:8.5px;background:#c1c1c1"></div>
<div class="b" style="left:1251px;top:832px;width:13.5px;height:10px;background:#dcdcdc"></div>
<svg style="left:56.5px;top:834px" width="5" height="7" viewBox="0 0 5 7" ><path d="M0.6 3.5L4.4 0.4V6.6Z" fill="#222"/></svg>
<svg style="left:1242px;top:834px" width="5" height="7" viewBox="0 0 5 7" ><path d="M4.4 3.5L0.6 0.4V6.6Z" fill="#222"/></svg>
<div class="b" style="left:1266px;top:84px;width:234px;height:759px;background:#fff;border-left:1.4px solid #e0e0e0"></div>
<span class="t" style="left:1280.50px;top:97.00px;font-size:10.28px;color:#0f7d5a;font-weight:bold;">Layers</span>
<span class="t" style="left:1339.00px;top:96.00px;font-size:11.60px;color:#5c5c5c;">Color Sync</span>
<div class="b" style="left:1267px;top:119px;width:233px;height:1.2000000000000028px;background:#e6e6e6"></div>
<div class="b" style="left:1267.7px;top:117.2px;width:58.700000000000045px;height:2.200000000000003px;background:#0f7d5a"></div>
<svg style="left:1281px;top:130px" width="16" height="16.4" viewBox="0 0 16 16.4" ><path d="M2.2 2.4H9V9.2H2.2ZM6.6 7.2H13.8V14H6.6Z" fill="none" stroke="#262626" stroke-width="1.1"/><circle cx="2.2" cy="2.4" r="1.25" fill="#fff" stroke="#262626" stroke-width="1"/><circle cx="9" cy="2.4" r="1.25" fill="#fff" stroke="#262626" stroke-width="1"/><circle cx="2.2" cy="9.2" r="1.25" fill="#fff" stroke="#262626" stroke-width="1"/><circle cx="13.8" cy="7.2" r="1.25" fill="#fff" stroke="#262626" stroke-width="1"/><circle cx="6.6" cy="14" r="1.25" fill="#fff" stroke="#262626" stroke-width="1"/><circle cx="13.8" cy="14" r="1.25" fill="#fff" stroke="#262626" stroke-width="1"/></svg>
<svg style="left:1313px;top:131px" width="16" height="15.4" viewBox="0 0 16 15.4" ><rect x="1.1" y="1.1" width="10.2" height="10.2" rx="1.2" fill="#fff" stroke="#262626" stroke-width="1.2"/><rect x="4.5" y="4.3" width="10.4" height="10.4" rx="1.2" fill="#fff" stroke="#262626" stroke-width="1.2"/><path d="M9.7 6.8V12.2M7 9.5H12.4" stroke="#262626" stroke-width="1.2"/></svg>
<svg style="left:1344px;top:131px" width="16" height="15.4" viewBox="0 0 16 15.4" ><path d="M0.6 3.4H15.4M5.4 3.2V2Q5.4 1 6.4 1H9.6Q10.6 1 10.6 2V3.2" fill="none" stroke="#262626" stroke-width="1.2" stroke-linecap="round"/><path d="M2.4 3.8L3.5 13.2Q3.6 14.2 4.6 14.2H11.4Q12.4 14.2 12.5 13.2L13.6 3.8" fill="none" stroke="#262626" stroke-width="1.25" stroke-linejoin="round"/><path d="M6.2 6.4V11M9.8 6.4V11" stroke="#262626" stroke-width="1.25"/></svg>
<div class="b" style="left:1267px;top:158.2px;width:222px;height:1.0px;background:#ececec"></div>
<div class="b" style="left:1489.6px;top:160px;width:10.400000000000091px;height:606.5px;background:#f1f1f1"></div>
<svg style="left:1492.4px;top:163.6px" width="6" height="4.4" viewBox="0 0 6 4.4" ><path d="M3 0.5L5.7 4H0.3Z" fill="#7a7a7a"/></svg>
<svg style="left:1492.4px;top:758.4px" width="6" height="4.4" viewBox="0 0 6 4.4" ><path d="M3 3.9L5.7 0.4H0.3Z" fill="#7a7a7a"/></svg>
<div class="b" style="left:1299.1px;top:174.2px;width:11.900000000000091px;height:17.80000000000001px;background:#454545;border:1.2px solid #1c1c1c"></div>
<span class="t" style="left:1321.00px;top:171.00px;font-size:11.18px;color:#6e6e6e;">Square</span>
<span class="t" style="left:1321.00px;top:186.00px;font-size:11.12px;color:#8e8e8e;">Basic Cut</span>
<div class="b" style="left:1271px;top:207.2px;width:215.4000000000001px;height:43.70000000000002px;background:#b4eedd;border-radius:3px"></div>
<svg style="left:1280.4px;top:223.4px" width="6" height="8.6" viewBox="0 0 6 8.6" ><path d="M1.2 1L4.6 4.3L1.2 7.6" fill="none" stroke="#222" stroke-width="1.2" stroke-linecap="round" stroke-linejoin="round"/></svg>
<svg style="left:1297.6px;top:220.6px" width="15.4" height="15" viewBox="0 0 15.4 15" ><path d="M1 4.4V2.4Q1 1 2.4 1H4.4M11 1H13Q14.4 1 14.4 2.4V4.4M14.4 10.6V12.6Q14.4 14 13 14H11M4.4 14H2.4Q1 14 1 12.6V10.6" fill="none" stroke="#262626" stroke-width="1.2" stroke-linecap="round"/><rect x="4" y="4" width="5" height="5" rx="1" fill="none" stroke="#262626" stroke-width="1.1"/><rect x="6.4" y="6.2" width="5.2" height="5.2" rx="1.2" fill="#b4eedd" stroke="#262626" stroke-width="1.1"/></svg>
<span class="t" style="left:1321.00px;top:223.00px;font-size:10.83px;color:#1d1d1d;font-weight:bold;">Group</span>
<div class="b" style="left:1267.4px;top:766.5px;width:232.5999999999999px;height:39.89999999999998px;background:#f3f3f3"></div>
<div class="b" style="left:1275.2px;top:772.3px;width:41.59999999999991px;height:28.0px;background:#fff;border:1px solid #8a8a8a;border-radius:2px"></div>
<span class="t" style="left:1325.00px;top:784.00px;font-size:7.78px;color:#555;">Blank Canvas</span>
<svg style="left:1281px;top:810px" width="15.4" height="15.4" viewBox="0 0 15.4 15.4" ><path d="M5.2 10.6A5.1 5.1 0 1 1 10.9 5.2" fill="none" stroke="#cfcfcf" stroke-width="1.2"/><rect x="5" y="5.2" width="9.6" height="9.4" rx="1.2" fill="none" stroke="#cfcfcf" stroke-width="1.2"/><path d="M10.9 5.2A5.1 5.1 0 0 1 5.2 10.6" fill="none" stroke="#cfcfcf" stroke-width="1.2"/></svg>
<span class="t" style="left:1280.00px;top:831.00px;font-size:8.20px;color:#cdcdcd;letter-spacing:-0.20px;">Slice</span>
<svg style="left:1316px;top:810px" width="15.4" height="15.4" viewBox="0 0 15.4 15.4" ><rect x="0.8" y="0.8" width="8.6" height="8.6" rx=".8" fill="none" stroke="#1c1c1c" stroke-width="1.3"/><circle cx="9.5" cy="9.2" r="4.8" fill="none" stroke="#1c1c1c" stroke-width="1.3"/></svg>
<svg style="left:1335px;top:816px" width="5.4" height="3.4" viewBox="0 0 5.4 3.4" ><path d="M0.2 0.3H5.2L2.7 3.2Z" fill="#111"/></svg>
<span class="t" style="left:1311.00px;top:831.00px;font-size:8.20px;color:#333;letter-spacing:-0.02px;-webkit-text-stroke:.2px #333;">Combine</span>
<svg style="left:1360.6px;top:812.8px" width="17.4" height="9.6" viewBox="0 0 17.4 9.6" ><path d="M13.2 1H4.8Q1 1 1 4.7Q1 8.4 4.8 8.4H12.6Q16.4 8.4 16.4 5.4Q16.4 2.6 13.2 2.6H5.6Q3.6 2.6 3.6 4.7Q3.6 6.6 5.6 6.6H12.6" fill="none" stroke="#1c1c1c" stroke-width="1.3" stroke-linecap="round"/></svg>
<span class="t" style="left:1357.30px;top:831.00px;font-size:8.20px;color:#333;letter-spacing:0.06px;-webkit-text-stroke:.2px #333;">Attach</span>
<svg style="left:1398.6px;top:810px" width="15.4" height="15.4" viewBox="0 0 15.4 15.4" ><path d="M7.7 0.6V5.4M5.6 3.6L7.7 5.6L9.8 3.6M1.4 5.6L7.7 10L14 5.6M1.4 9.6L7.7 14L14 9.6" fill="none" stroke="#cfcfcf" stroke-width="1.2" stroke-linejoin="round"/></svg>
<span class="t" style="left:1393.70px;top:831.00px;font-size:8.20px;color:#cdcdcd;letter-spacing:-0.08px;">Flatten</span>
<svg style="left:1438.4px;top:809.8px" width="17" height="16" viewBox="0 0 17 16" ><circle cx="8.5" cy="8" r="6.9" fill="none" stroke="#cfcfcf" stroke-width="1.3" stroke-dasharray="3.6 2.6"/></svg>
<span class="t" style="left:1431.90px;top:831.00px;font-size:8.20px;color:#cdcdcd;letter-spacing:0.03px;">Contour</span>
<div class="b" style="left:0px;top:842.6px;width:1500px;height:1.3999999999999773px;background:#8d8d8d"></div>
<div class="b" style="left:128px;top:798px;width:41px;height:25px;background:rgba(225,225,225,.55);border-radius:12px"></div>
<svg style="left:149px;top:803px" width="16" height="16" viewBox="0 0 16 16" ><circle cx="8" cy="8" r="6.6" fill="none" stroke="#c9c9c9" stroke-width="1.2"/><path d="M8 4.6V11.4M4.6 8H11.4" stroke="#c9c9c9" stroke-width="1.2"/></svg>
<span class="t" style="left:134.00px;top:807.00px;font-size:10.11px;color:#cfcfcf;">%</span>
<svg style="left:0;top:720px" width="180" height="124" viewBox="0 720 180 124">
<ellipse cx="76.8" cy="782" rx="66.8" ry="52" fill="#c93b1f"/>
<g fill="#fff" font-family="'Liberation Serif',serif" font-style="italic">
<text x="27" y="779.6" font-size="47" textLength="24" lengthAdjust="spacingAndGlyphs">C</text>
<text x="51.3" y="779.6" font-size="30" font-weight="bold" textLength="46" lengthAdjust="spacingAndGlyphs">raft</text>
<text x="41" y="813.8" font-size="47" textLength="22" lengthAdjust="spacingAndGlyphs">S</text>
<text x="63" y="813.8" font-size="29" font-weight="bold" textLength="55.5" lengthAdjust="spacingAndGlyphs">arah</text>
</g>
<text x="104" y="772.2" font-family="'Liberation Serif',serif" font-weight="bold" font-size="8.4" fill="#fff" textLength="26.8" lengthAdjust="spacingAndGlyphs">WITH</text>
<path d="M104.4 778.8Q107 774.4 114 775.8Q124 778 131.8 773.6Q128.4 780.6 118 779.2Q109 777.6 104.4 778.8Z" fill="#fff"/>
<g fill="none" stroke="#fff" stroke-width="1.2" stroke-linecap="round">
<path d="M38 755C33.5 748.5 25 749.5 25.2 756C25.4 761 30 763.4 32.6 761.6"/>
<path d="M51 813C44 822 34 816 35 806.6C36 798 44.6 795.6 47 800.6C48.4 804.6 44 806.6 42 804"/>
<path d="M99 798C105 790 111 785 117.6 784C124.6 783 127.4 788 125 792.4C122.6 796.4 116.6 795.6 115.4 792"/>
<path d="M108 790C100 786 92 785.6 87.6 787C82 789 82.4 794.6 86.6 795C90 795.2 91 792 89 790.8"/>
<path d="M75 770.8C83 769.4 91 768.6 97.6 768.8" stroke-width="1.4"/>
</g>
</svg>
</body></html>
